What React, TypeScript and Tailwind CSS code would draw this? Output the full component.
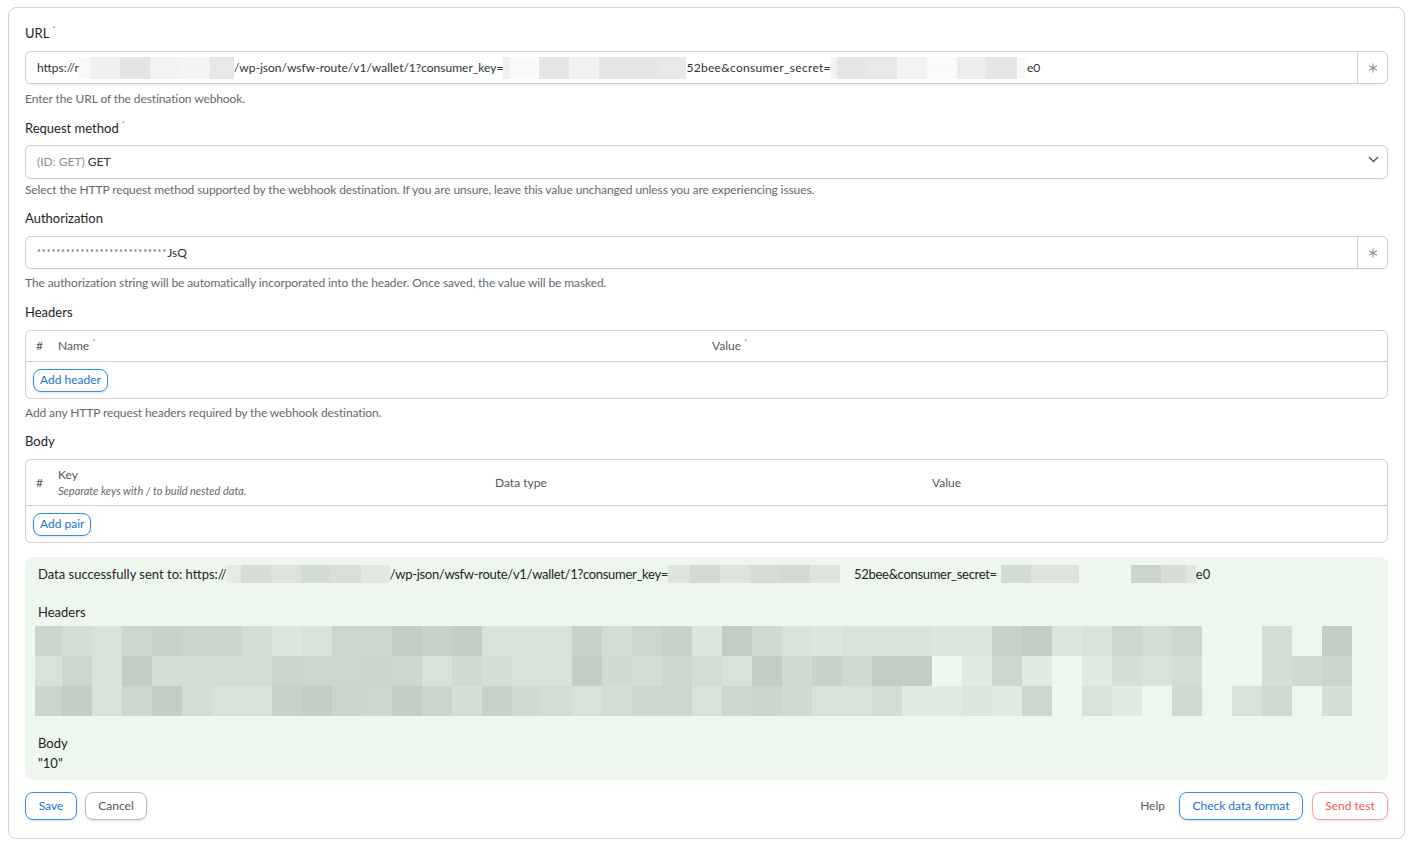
import React from "react";

type Block = [number, string];

// pixelated redaction strip: list of [width, colour] cells
function Redact({ cells, h }: { cells: Block[]; h: number }) {
  return (
    <span className="inline-flex align-middle" style={{ height: h }}>
      {cells.map(([w, c], i) => (
        <span key={i} style={{ width: w, height: h, backgroundColor: c }} />
      ))}
    </span>
  );
}

const GREENS = [
  "#cbd5cd",
  "#d3ddd5",
  "#ccd6ce",
  "#d8e2da",
  "#c3cdc5",
  "#d0dad2",
  "#dde6de",
  "#c8d2ca",
  "#d5dfd7",
  "#d9e2d8",
];

function cellColor(r: number, c: number) {
  const n = Math.abs(Math.sin(r * 12.9898 + c * 78.233) * 43758.5453);
  return GREENS[Math.floor((n - Math.floor(n)) * GREENS.length)];
}

// blurred header dump inside the result box
function HeaderMosaic() {
  const cols = 44;
  const widths = Array.from({ length: cols }, (_, i) => (i === 0 ? 27 : 30));
  const blank = (r: number, c: number) => {
    if (c >= 39 && c <= 40) return !(r === 2 && c === 40);
    if (c === 42 && r === 0) return true;
    if (c === 42 && r === 2) return true;
    if (r === 1 && (c === 30 || c === 34)) return true;
    if (r === 2 && (c === 34 || c === 37)) return true;
    return false;
  };
  const light = (r: number, c: number) =>
    (r === 2 && (c === 29 || c === 30 || c === 32 || c === 36)) ||
    (r === 1 && (c === 31 || c === 33 || c === 35));
  return (
    <div className="-ml-[3px] flex flex-col py-[4px]">
      {[0, 1, 2].map((r) => (
        <div key={r} className="flex h-[30px]">
          {widths.map((w, c) => (
            <div
              key={c}
              style={{
                width: w,
                backgroundColor: blank(r, c)
                  ? "transparent"
                  : light(r, c)
                  ? "#e2ebe3"
                  : cellColor(r, c),
              }}
            />
          ))}
        </div>
      ))}
    </div>
  );
}

function Req() {
  return (
    <span className="ml-[3px] inline-block h-0 align-top text-[8px] leading-[10px] text-[#f26d6d]">*</span>
  );
}

function Label({ children, req }: { children: React.ReactNode; req?: boolean }) {
  return (
    <div className="h-[18px] text-[13px] leading-[18px] text-[#1d2327]">
      {children}
      {req && <Req />}
    </div>
  );
}

function Help({ children, className = "" }: { children: React.ReactNode; className?: string }) {
  return (
    <p className={"text-[12px] leading-[16px] tracking-[-0.1px] text-[#646970] " + className}>{children}</p>
  );
}

function Asterisk() {
  return (
    <svg width="10" height="10" viewBox="0 0 10 10">
      <g stroke="#8c8f94" strokeWidth="1.1">
        <path d="M5 0.5 V9.5" />
        <path d="M1.1 2.75 L8.9 7.25" />
        <path d="M1.1 7.25 L8.9 2.75" />
      </g>
    </svg>
  );
}

function OutlineBtn({
  children,
  tone = "blue",
  className = "",
}: {
  children: React.ReactNode;
  tone?: "blue" | "gray" | "red";
  className?: string;
}) {
  const tones = {
    blue: "border-[#2c93e8] text-[#2271d1]",
    gray: "border-[#b9b9b9] text-[#50575e]",
    red: "border-[#f5a3a3] text-[#f05656]",
  };
  return (
    <button
      className={
        "rounded-[8px] border bg-white text-[12px] leading-none shadow-[0_1px_3px_rgba(0,0,0,0.12)] " +
        tones[tone] +
        " " +
        className
      }
    >
      {children}
    </button>
  );
}

export default function App() {
  return (
    <div className="min-h-screen bg-white px-[8px] pt-[7px] font-['Lato',sans-serif]">
      <div className="w-[1397px] rounded-[8px] border border-[#d4d4d4] px-[16px] pt-[16px] pb-[18px]">
        {/* URL */}
        <Label req>URL</Label>
        <div className="mt-[9px] flex h-[33px] rounded-[6px] border border-[#d0d0d0] shadow-[0_1px_2px_rgba(0,0,0,0.06)]">
          <div className="flex flex-1 items-center pl-[11px] text-[12px] text-[#2c3338]">
            <span>https://r</span>
            <Redact
              h={22}
              cells={[
                [12, "#f8f8f8"],
                [29, "#f0f0f0"],
                [30, "#e4e4e4"],
                [30, "#f3f3f3"],
                [30, "#f5f5f5"],
                [24, "#e8e8e8"],
              ]}
            />
            <span>/wp-json/wsfw-route/v1/wallet/1?consumer_key=</span>
            <Redact
              h={22}
              cells={[
                [7, "#efefef"],
                [29, "#f9f9f9"],
                [30, "#e5e5e5"],
                [30, "#f1f1f1"],
                [30, "#e6e6e6"],
                [30, "#e6e6e6"],
                [27, "#e8e8e8"],
              ]}
            />
            <span className="tracking-[0.3px]">52bee&amp;consumer_secret=</span>
            <Redact
              h={22}
              cells={[
                [6, "#f3f3f3"],
                [30, "#e6e6e6"],
                [30, "#e8e8e8"],
                [30, "#f3f3f3"],
                [30, "#fafafa"],
                [30, "#ececec"],
                [30, "#e6e6e6"],
                [10, "#fafafa"],
              ]}
            />
            <span>e0</span>
          </div>
          <div className="flex w-[30px] items-center justify-center border-l border-[#d0d0d0]">
            <Asterisk />
          </div>
        </div>
        <Help className="mt-[7px]">Enter the URL of the destination webhook.</Help>

        {/* Request method */}
        <div className="mt-[12px]">
          <Label req>Request method</Label>
        </div>
        <div className="mt-[8px] flex h-[34px] items-center rounded-[6px] border border-[#d0d0d0] pl-[11px] pr-[8px] shadow-[0_1px_2px_rgba(0,0,0,0.06)]">
          <span className="flex-1 text-[12px] text-[#2c3338]">
            <span className="text-[#8c8f94]">(ID: GET)</span> GET
          </span>
          <svg width="11" height="7" viewBox="0 0 11 7" className="-mt-[6px]">
            <path d="M1 1 L5.5 5.5 L10 1" fill="none" stroke="#50575e" strokeWidth="1.4" />
          </svg>
        </div>
        <Help className="mt-[3px]">
          Select the HTTP request method supported by the webhook destination. If you are unsure, leave this value
          unchanged unless you are experiencing issues.
        </Help>

        {/* Authorization */}
        <div className="mt-[11px]">
          <Label>Authorization</Label>
        </div>
        <div className="mt-[9px] flex h-[33px] rounded-[6px] border border-[#d0d0d0] shadow-[0_1px_2px_rgba(0,0,0,0.06)]">
          <div className="flex flex-1 items-center pl-[11px] text-[12px] text-[#2c3338]">
            <span className="text-[9px] tracking-[1px] text-[#50575e]">***************************</span>
            <span>JsQ</span>
          </div>
          <div className="flex w-[30px] items-center justify-center border-l border-[#d0d0d0]">
            <Asterisk />
          </div>
        </div>
        <Help className="mt-[6px]">
          The authorization string will be automatically incorporated into the header. Once saved, the value will be
          masked.
        </Help>

        {/* Headers */}
        <div className="mt-[12px]">
          <Label>Headers</Label>
        </div>
        <div className="mt-[9px] rounded-[6px] border border-[#d0d0d0]">
          <div className="grid h-[31px] grid-cols-[32px_654px_1fr] items-center border-b border-[#d0d0d0] text-[12px] text-[#50575e]">
            <span className="pl-[10px]">#</span>
            <span>
              Name
              <Req />
            </span>
            <span>
              Value
              <Req />
            </span>
          </div>
          <div className="flex h-[36px] items-center px-[7px]">
            <OutlineBtn className="h-[23px] px-[6px]">Add header</OutlineBtn>
          </div>
        </div>
        <Help className="mt-[6px]">Add any HTTP request headers required by the webhook destination.</Help>

        {/* Body */}
        <div className="mt-[11px]">
          <Label>Body</Label>
        </div>
        <div className="mt-[9px] rounded-[6px] border border-[#d0d0d0]">
          <div className="grid h-[46px] grid-cols-[32px_437px_437px_1fr] items-center border-b border-[#d0d0d0] text-[12px] text-[#50575e]">
            <span className="pl-[10px]">#</span>
            <div className="leading-[16px]">
              <div>Key</div>
              <div className="text-[11px] italic text-[#646970]">Separate keys with / to build nested data.</div>
            </div>
            <span>Data type</span>
            <span>Value</span>
          </div>
          <div className="flex h-[36px] items-center px-[7px]">
            <OutlineBtn className="h-[23px] px-[6px]">Add pair</OutlineBtn>
          </div>
        </div>

        {/* Test result */}
        <div className="mt-[14px] rounded-[8px] bg-[#edf7ee] px-[13px] pt-[7px] pb-[7px] text-[13px] leading-[20px] text-[#1d2327]">
          <div className="flex items-center">
            <span>Data successfully sent to: https://</span>
            <Redact
              h={18}
              cells={[
                [14, "#e3ebe4"],
                [30, "#d6ded7"],
                [30, "#dbe3dc"],
                [30, "#d3dcd4"],
                [30, "#d8e0d9"],
                [29, "#e0e8e1"],
              ]}
            />
            <span className="tracking-[-0.3px]">/wp-json/wsfw-route/v1/wallet/1?consumer_key=</span>
            <Redact
              h={18}
              cells={[
                [22, "#dde5de"],
                [30, "#d2dad3"],
                [30, "#dce4dd"],
                [30, "#d5ddd6"],
                [30, "#d2dad3"],
                [30, "#dde5de"],
                [14, "#edf7ee"],
              ]}
            />
            <span className="tracking-[-0.3px]">52bee&amp;consumer_secret=</span>
            <Redact
              h={18}
              cells={[
                [4, "#edf7ee"],
                [30, "#d3dcd4"],
                [48, "#dbe3dc"],
                [30, "#edf7ee"],
                [22, "#edf7ee"],
                [30, "#ccd5cd"],
                [25, "#d6ded7"],
                [10, "#dfe7e0"],
              ]}
            />
            <span>e0</span>
          </div>
          <div className="mt-[18px]">Headers</div>
          <HeaderMosaic />
          <div className="mt-[13px]">Body</div>
          <div>"10"</div>
        </div>

        {/* Actions */}
        <div className="mt-[12px] flex items-center">
          <OutlineBtn className="h-[28px] w-[52px]">Save</OutlineBtn>
          <OutlineBtn tone="gray" className="ml-[8px] h-[28px] w-[62px]">
            Cancel
          </OutlineBtn>
          <span className="ml-auto text-[12px] text-[#50575e]">Help</span>
          <OutlineBtn className="ml-[14px] h-[28px] w-[124px]">Check data format</OutlineBtn>
          <OutlineBtn tone="red" className="ml-[9px] h-[28px] w-[76px]">
            Send test
          </OutlineBtn>
        </div>
      </div>
    </div>
  );
}
